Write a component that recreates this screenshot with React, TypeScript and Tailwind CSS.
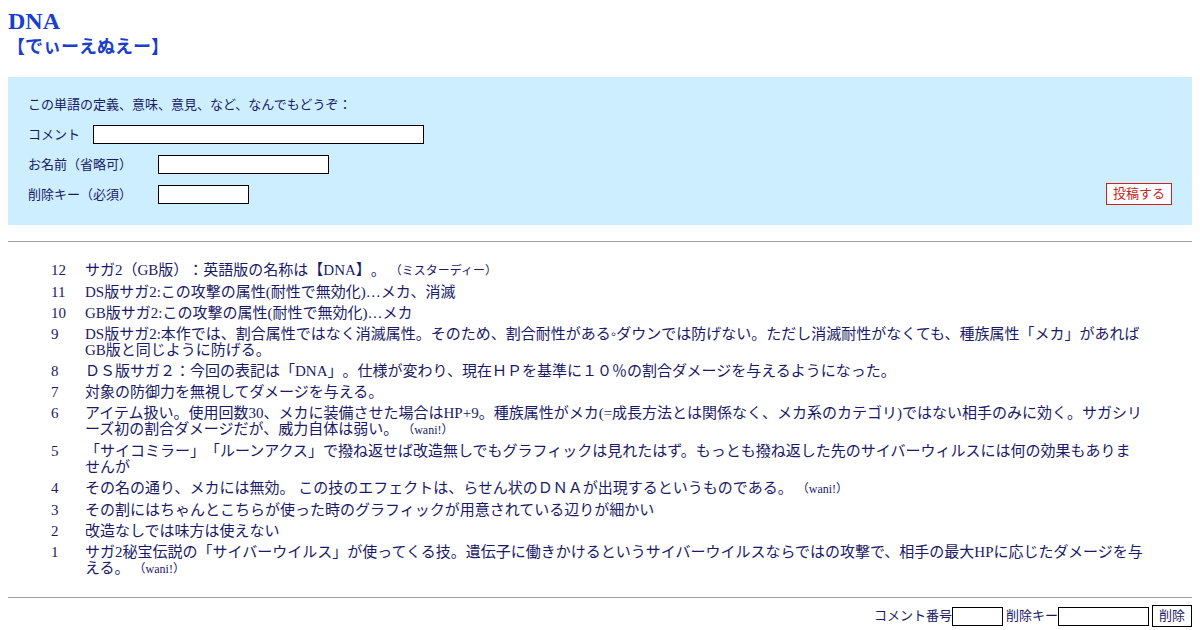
import React from "react";

const jp = { fontFamily: '"Liberation Sans", "Noto Sans CJK JP", sans-serif' };
const serifJp = { fontFamily: '"Liberation Serif", "Noto Sans CJK JP", serif' };

type C = { n: number; text: React.ReactNode; by?: string };

const comments: C[] = [
  { n: 12, text: "サガ2（GB版）：英語版の名称は【DNA】。", by: "（ミスターディー）" },
  { n: 11, text: "DS版サガ2:この攻撃の属性(耐性で無効化)…メカ、消滅" },
  { n: 10, text: "GB版サガ2:この攻撃の属性(耐性で無効化)…メカ" },
  { n: 9, text: "DS版サガ2:本作では、割合属性ではなく消滅属性。そのため、割合耐性がある◦ダウンでは防げない。ただし消滅耐性がなくても、種族属性「メカ」があればGB版と同じように防げる。" },
  { n: 8, text: "ＤＳ版サガ２：今回の表記は「DNA」。仕様が変わり、現在ＨＰを基準に１０％の割合ダメージを与えるようになった。" },
  { n: 7, text: "対象の防御力を無視してダメージを与える。" },
  { n: 6, text: "アイテム扱い。使用回数30、メカに装備させた場合はHP+9。種族属性がメカ(=成長方法とは関係なく、メカ系のカテゴリ)ではない相手のみに効く。サガシリーズ初の割合ダメージだが、威力自体は弱い。", by: "（wani!）" },
  {
    n: 5,
    text: (
      <>
        「サイコミラー」「ルーンアクス」で撥ね返せば改造無しでもグラフィックは見れたはず。もっとも撥ね返した先のサイバーウィルスには何の効果もありま
        <br />
        せんが
      </>
    ),
  },
  { n: 4, text: "その名の通り、メカには無効。 この技のエフェクトは、らせん状のＤＮＡが出現するというものである。", by: "（wani!）" },
  { n: 3, text: "その割にはちゃんとこちらが使った時のグラフィックが用意されている辺りが細かい" },
  { n: 2, text: "改造なしでは味方は使えない" },
  { n: 1, text: "サガ2秘宝伝説の「サイバーウイルス」が使ってくる技。遺伝子に働きかけるというサイバーウイルスならではの攻撃で、相手の最大HPに応じたダメージを与える。", by: "（wani!）" },
];

export default function App() {
  return (
    <div className="bg-white w-[1200px] h-[630px] overflow-hidden px-2 text-[#1a1a66] [text-spacing-trim:space-all]" style={serifJp}>
      <h1 className="pt-[7px] text-[24px] leading-[28px] font-bold text-[#1a3fcc]" style={serifJp}>DNA</h1>
      <h2 className="pt-[1px] text-[18px] leading-[22px] font-bold text-[#1a3fcc] -ml-[1px]" style={jp}>【でぃーえぬえー】</h2>

      <div className="mt-[19px] h-[148px] bg-[#cceeff] pl-5 pr-5 pt-[19px] text-[13px] leading-[17px]" style={jp}>
        <div className="h-[17px]">この単語の定義、意味、意見、など、なんでもどうぞ：</div>
        <div className="mt-[11px] flex items-center h-[20px]">
          <span>コメント</span>
          <input className="ml-[13px] w-[331px] h-[19px] border border-black bg-white" />
        </div>
        <div className="mt-[10px] flex items-center h-[20px]">
          <span className="w-[130px]">お名前（省略可）</span>
          <input className="w-[171px] h-[19px] border border-black bg-white" />
        </div>
        <div className="mt-[10px] flex items-center h-[20px]">
          <span className="w-[130px]">削除キー（必須）</span>
          <input className="w-[91px] h-[19px] border border-black bg-white" />
          <button className="ml-auto w-[66px] h-[22px] border border-[#cc2222] bg-white text-[#cc2222] text-[13px] leading-[20px]" style={jp}>投稿する</button>
        </div>
      </div>

      <hr className="mt-4 border-0 border-t border-[#a0a0a0]" />

      <div className="pt-[17px] pl-[43px] pr-[42px] text-[15px] leading-[16px]">
        {comments.map((c) => (
          <div key={c.n} className="flex py-[2.5px]">
            <div className="w-[34px] shrink-0">{c.n}</div>
            <div className="flex-1">
              {c.text}
              {c.by && (
                <span className="ml-[4px] text-[12px]">{c.by}</span>
              )}
            </div>
          </div>
        ))}
      </div>

      <hr className="mt-[18px] border-0 border-t border-[#a0a0a0]" />

      <div className="mt-[7px] flex justify-end items-center text-[13px]" style={jp}>
        <span>コメント番号</span>
        <input className="w-[51px] h-[19px] border border-black bg-white" />
        <span className="ml-[3px]">削除キー</span>
        <input className="w-[91px] h-[19px] border border-black bg-white" />
        <button className="ml-[3px] w-[40px] h-[22px] border border-black bg-white text-[13px] text-[#1a1a66]" style={jp}>削除</button>
      </div>
    </div>
  );
}
